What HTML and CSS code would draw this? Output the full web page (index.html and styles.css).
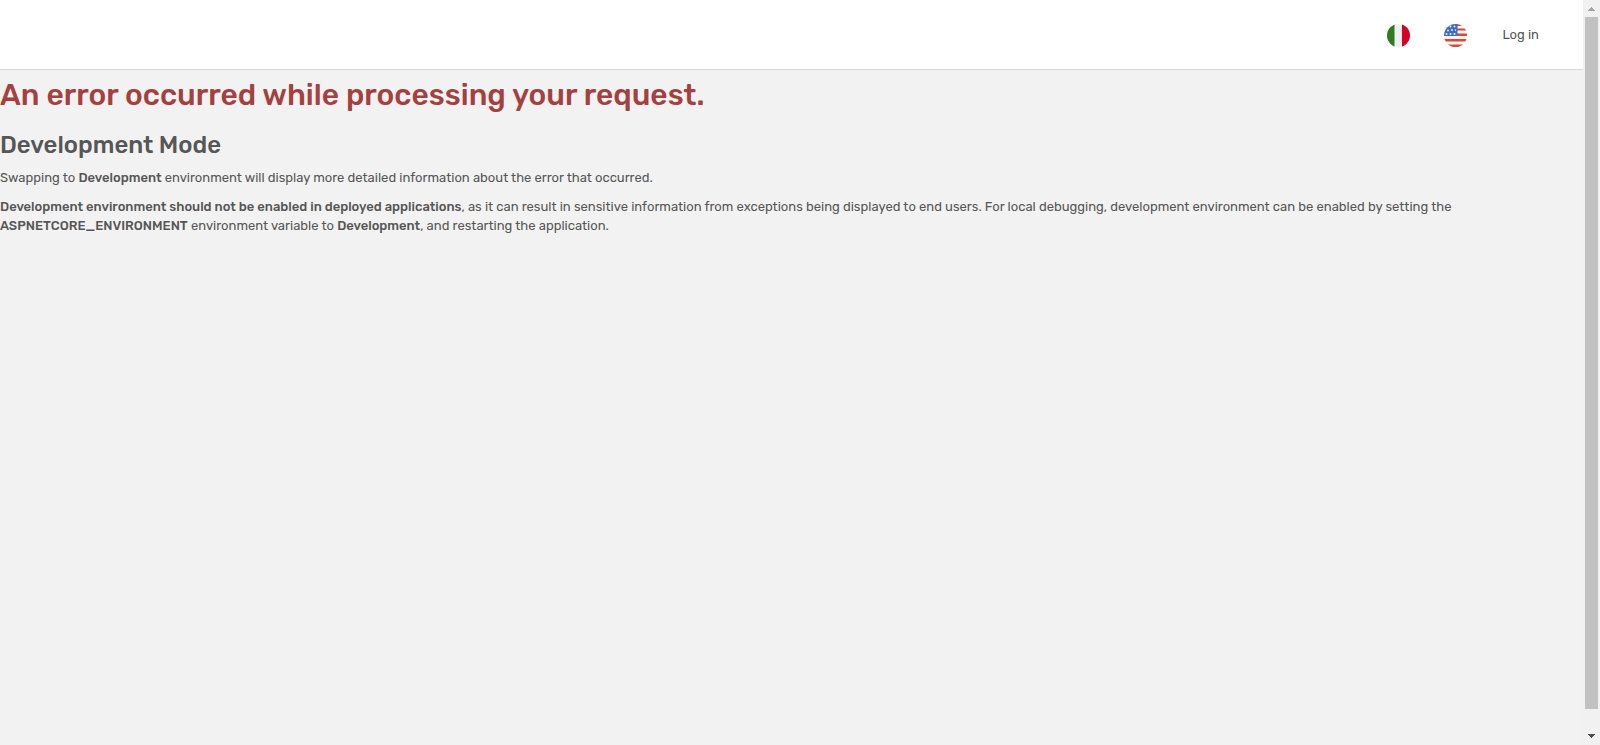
FILE: index.html
```html
<!DOCTYPE html>
<html lang="en">
<head>
<meta charset="utf-8">
<title>Error</title>
<link rel="stylesheet" href="styles.css">
</head>
<body>
<div class="page">
  <header class="topbar">
    <nav class="nav">
      <a class="flag-link" href="#it" aria-label="Italiano">
        <svg class="flag" viewBox="0 0 24 24" aria-hidden="true">
          <defs><clipPath id="round"><circle cx="12.500" cy="12.500" r="11.500"/></clipPath></defs>
          <g clip-path="url(#round)">
            <path fill="#f0f0f0" d="M0 0h24v24H0z"/>
            <path fill="#307a20" d="M0 0h8.500v24H0z"/>
            <path fill="#d80027" d="M16 0h8v24h-8z"/>
          </g>
        </svg>
      </a>
      <a class="flag-link" href="#en" aria-label="English">
        <svg class="flag" viewBox="0 0 24 24" aria-hidden="true">
          <g clip-path="url(#round)">
            <path fill="#f5f3ee" d="M0 0h24v24H0z"/>
            <path fill="#d8493a" d="M12 1h12v2H12zM12 5.500h12v2H12zM12 10.500h12v2.500H12zM0 16h24v2.500H0zM0 21.500h24V24H0z"/>
            <path fill="#3d6cc0" d="M0 0h14.500v13H0z"/>
            <g fill="#f5f3ee">
              <circle cx="7.500" cy="3.500" r=".9"/><circle cx="11.500" cy="3.500" r=".9"/>
              <circle cx="5" cy="7.500" r=".9"/><circle cx="9" cy="7" r=".9"/><circle cx="12.500" cy="7" r=".8"/>
              <circle cx="3.500" cy="11" r="1"/><circle cx="7.500" cy="11" r="1"/><circle cx="11.500" cy="11" r="1"/>
            </g>
          </g>
        </svg>
      </a>
      <a class="login" href="#login">Log in</a>
    </nav>
  </header>
  <main class="content">
    <h1 class="title">An error occurred while processing your request.</h1>
    <h2 class="subtitle">Development Mode</h2>
    <p class="text">Swapping to <strong>Development</strong> environment will display more detailed information about the error that occurred.</p>
    <p class="text"><strong>Development environment should not be enabled in deployed applications</strong>, as it can result in sensitive information from exceptions being displayed to end users. For local debugging, development environment can be enabled by setting the <strong>ASPNETCORE_ENVIRONMENT</strong> environment variable to <strong>Development</strong>, and restarting the application.</p>
  </main>
</div>
<div class="scrollbar" aria-hidden="true">
  <svg class="arrow arrow-up" viewBox="0 0 17 17"><path d="M5 11h7v-1h-1v-1h-1v-1h-1v-1h-1v1h-1v1h-1v1h-1z"/></svg>
  <div class="track"><div class="thumb"></div></div>
  <svg class="arrow arrow-down" viewBox="0 0 17 17"><path d="M5 6h7v1h-1v1h-1v1h-1v1h-1v-1h-1v-1h-1v-1h-1z"/></svg>
</div>
</body>
</html>
```
FILE: styles.css
```css
* { box-sizing: border-box; }

body {
  display: flex;
  min-height: 100vh;
  margin: 0;
  background: #f2f2f2;
  color: #565656;
  font-family: Rubik, Roboto, sans-serif;
  font-size: 13px;
  line-height: 19px;
}

.page { flex: 1; min-width: 0; }

.topbar {
  display: flex;
  justify-content: flex-end;
  height: 70px;
  padding-right: 44px;
  background: #fff;
  border-bottom: 1px solid #d9d9d9;
}

.nav { display: flex; align-items: center; gap: 33px; }
.flag-link { display: block; }
.flag { display: block; width: 24px; height: 24px; }
.login { padding-left: 2px; color: #565656; text-decoration: none; }

.title, .subtitle { margin: 0; font-weight: 500; }

.title {
  padding: 6px 0 14px;
  color: #a34040;
  font-size: 30px;
  line-height: 38px;
}

.subtitle {
  padding-bottom: 6px;
  font-size: 24px;
  line-height: 34px;
}

.text { margin: 0 0 10px; }
.text strong { font-weight: 500; }

.scrollbar {
  display: flex;
  flex-direction: column;
  width: 17px;
  background: #f1f1f1;
}

.arrow { width: 17px; height: 17px; shape-rendering: crispEdges; }
.arrow-up { fill: #a3a3a3; }
.arrow-down { fill: #505050; }
.track { flex: 1; padding: 0 2px; }
.thumb { height: 97.300%; background: #c1c1c1; }
```
